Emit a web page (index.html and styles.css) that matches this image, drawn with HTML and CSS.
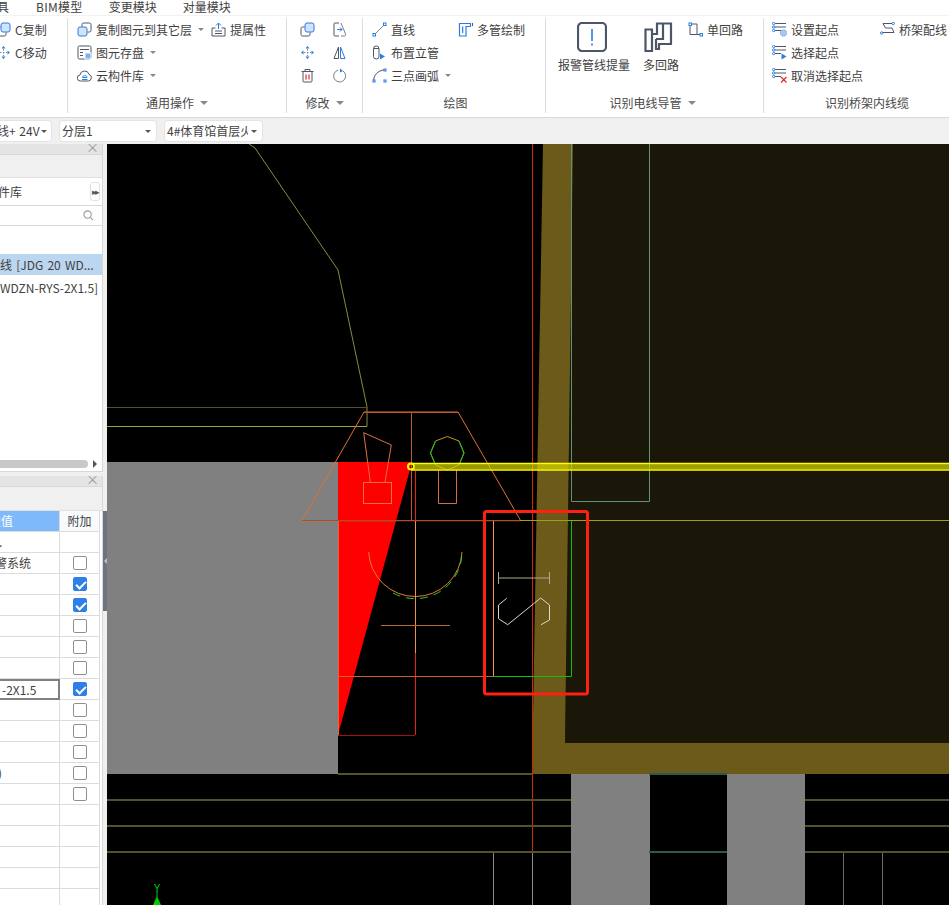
FILE: index.html
```html
<!DOCTYPE html>
<html lang="zh-CN">
<head>
<meta charset="utf-8">
<title>BIM</title>
<link rel="stylesheet" href="styles.css">
</head>
<body>
<div class="app">
  <nav class="menu">
    <span class="m0">具</span><span class="m1">BIM模型</span><span class="m2">变更模块</span><span class="m3">对量模块</span>
  </nav>

  <section class="ribbon">
    <div class="group g0">
      <div class="gbody">
        <div class="item"><svg class="ic" viewBox="0 0 15 15"><rect class="bf" x="5" y="1" width="9" height="9" rx="2"/><path class="dk" d="M4.5 5h-2A1.5 1.5 0 0 0 1 6.5v6A1.5 1.5 0 0 0 2.500 14h6a1.500 1.500 0 0 0 1.500-1.500v-2"/></svg><span>C复制</span></div>
        <div class="item"><svg class="ic" viewBox="0 0 15 15"><path class="bl" d="M7.500 1 5.500 3.500h4zM7.500 14l-2-2.500h4zM1 7.500l2.500-2v4zM14 7.500l-2.500-2v4z"/><path class="dash" d="M7.500 4v7M4 7.500h7"/></svg><span>C移动</span></div>
      </div>
    </div>

    <div class="group g1">
      <div class="gbody">
        <div class="item"><svg class="ic" viewBox="0 0 15 15"><rect class="bf" x="1" y="5" width="9" height="9" rx="2"/><path class="dk" d="M5 4.500v-2A1.500 1.500 0 0 1 6.500 1h6A1.500 1.500 0 0 1 14 2.500v6a1.500 1.500 0 0 1-1.500 1.500h-2"/></svg><span>复制图元到其它层</span><i class="caret"></i></div>
        <div class="item"><svg class="ic" viewBox="0 0 15 15"><path class="bs" d="M7.500 7V1M5 3.500 7.500 1 10 3.500"/><path class="dk" d="M4.500 6H1v8h13V6h-3.500M4 9h7M4 11.500h7"/></svg><span>提属性</span></div>
        <div class="item wide"><svg class="ic" viewBox="0 0 15 15"><rect class="dk" x="1" y="1" width="13" height="13" rx="1.500"/><path class="dk" d="M3 4.500h9M3 7.500h3M3 10.500h3"/><rect class="bl2" x="8" y="8" width="6" height="6"/></svg><span>图元存盘</span><i class="caret"></i></div>
        <div class="item wide"><svg class="ic" viewBox="0 0 15 15"><path class="dk" d="M3.500 13a3 3 0 0 1-.5-6 4.600 4.600 0 0 1 9-.6A3.400 3.400 0 0 1 11.500 13z"/><path class="bs" d="M5 11.500h5.500M5.500 9.500c0-2.500 4.500-2.500 4.500 0z"/></svg><span>云构件库</span><i class="caret"></i></div>
      </div>
      <div class="glabel">通用操作<i class="caret big"></i></div>
    </div>

    <div class="group g2">
      <div class="gbody">
        <div class="item"><svg class="ic" viewBox="0 0 15 15"><rect class="bf" x="5" y="1" width="9" height="9" rx="2"/><path class="dk" d="M4.500 5h-2A1.500 1.500 0 0 0 1 6.500v6A1.500 1.500 0 0 0 2.500 14h6a1.500 1.500 0 0 0 1.500-1.500v-2"/></svg></div>
        <div class="item"><svg class="ic" viewBox="0 0 15 15"><path class="dk" d="M7 1H3a1 1 0 0 0-1 1v11a1 1 0 0 0 1 1h4"/><path class="gr" d="M9 1l4.500 11a1.300 1.300 0 0 1-1.300 2H9"/><path class="bs" d="M5 7.500h5M8 5.500l2 2-2 2"/></svg></div>
        <div class="item"><svg class="ic" viewBox="0 0 15 15"><path class="bl" d="M7.500 1 5.500 3.500h4zM7.500 14l-2-2.500h4zM1 7.500l2.500-2v4zM14 7.500l-2.500-2v4z"/><path class="dash" d="M7.500 4v7M4 7.500h7"/></svg></div>
        <div class="item"><svg class="ic" viewBox="0 0 15 15"><path class="dk" d="M6.500 2v11.500H2z"/><path class="bs" d="M8.500 2v11.500H13z"/></svg></div>
        <div class="item"><svg class="ic" viewBox="0 0 15 15"><path class="dk" d="M1.500 3.500h12M5 3.500V1.500h5v2M3 3.500v9.500a1 1 0 0 0 1 1h7a1 1 0 0 0 1-1V3.500"/><path class="rd" d="M6 6.500v5M9 6.500v5"/></svg></div>
        <div class="item"><svg class="ic" viewBox="0 0 15 15"><path class="gr" d="M6 2.200A6 6 0 1 0 11 3"/><path class="bl" d="M8 .500l3 2.500-3 1.500z"/></svg></div>
      </div>
      <div class="glabel">修改<i class="caret big"></i></div>
    </div>

    <div class="group g3">
      <div class="gbody">
        <div class="item"><svg class="ic" viewBox="0 0 15 15"><path class="gr" d="M2.500 12.500 12.500 2.500"/><rect class="nd" x="1" y="11.500" width="2.500" height="2.500"/><rect class="nd" x="11.500" y="1" width="2.500" height="2.500"/></svg><span>直线</span></div>
        <div class="item"><svg class="ic" viewBox="0 0 15 15"><path class="bp" d="M1.500 1.500h11v3H8v9.500H1.500zM4.700 4.500V11"/><path class="dk" d="M14.500 1v3"/></svg><span>多管绘制</span></div>
        <div class="item"><svg class="ic" viewBox="0 0 15 15"><rect class="dk" x="1.500" y="1" width="5.500" height="13" rx="2.700"/><path class="dk" d="M1.500 3.500h5.500"/><path class="bl" d="M8 8.500l5 3-5 3z"/></svg><span>布置立管</span></div>
        <div class="item"></div>
        <div class="item"><svg class="ic" viewBox="0 0 15 15"><path class="dk" d="M1.500 13.500C1.500 7 6 2.500 12.500 1.800"/><rect class="nd" x="1" y="12" width="2" height="2"/><rect class="nd" x="12" y="1" width="2" height="2"/><rect class="nd" x="12" y="12" width="2" height="2"/></svg><span>三点画弧</span><i class="caret"></i></div>
      </div>
      <div class="glabel">绘图</div>
    </div>

    <div class="group g4">
      <div class="gbody">
        <div class="bigitem b1">
          <svg class="icb" viewBox="0 0 30 30"><rect class="dk2" x="1" y="1" width="28" height="28" rx="4"/><path class="bs2" d="M15 7v12M15 21.500v2"/></svg>
          <span>报警管线提量</span>
        </div>
        <div class="bigitem b2">
          <svg class="icb" viewBox="0 0 30 30"><path class="dk2" d="M1.500 7.500H8V29H1.500zM8 12h5V1.500h6V17h-7M19 1.500h8V22H15v5h-3V17"/></svg>
          <span>多回路</span>
        </div>
        <div class="item"><svg class="ic" viewBox="0 0 15 15"><path class="dk" d="M2 2v10.500h10.500M2 2h7v10.500"/><rect class="nd" x="1" y="1" width="2.500" height="2.500"/><rect class="nd" x="12" y="11.500" width="2.500" height="2.500"/></svg><span>单回路</span></div>
      </div>
      <div class="glabel">识别电线导管<i class="caret big"></i></div>
    </div>

    <div class="group g5">
      <div class="gbody">
        <div class="item"><svg class="ic" viewBox="0 0 15 15"><path class="dk" d="M3 1.500h11M3 5h11M3 8.500h6"/><circle class="nd" cx="1.700" cy="1.500" r="1.200"/><circle class="nd" cx="1.700" cy="5" r="1.200"/><circle class="nd" cx="1.700" cy="8.500" r="1.200"/><circle class="bd" cx="11.500" cy="11" r="3.200"/></svg><span>设置起点</span></div>
        <div class="item"><svg class="ic" viewBox="0 0 15 15"><path class="dk" d="M12.500 1.500H3L5.500 6H12L14 10.500H2.500"/><circle class="nd" cx="13.200" cy="1.500" r="1.200"/><circle class="nd" cx="1.700" cy="11" r="1.200"/></svg><span>桥架配线</span></div>
        <div class="item"><svg class="ic" viewBox="0 0 15 15"><path class="dk" d="M3 1.500h11M3 5h11M3 8.500h6"/><circle class="nd" cx="1.700" cy="1.500" r="1.200"/><circle class="nd" cx="1.700" cy="5" r="1.200"/><circle class="nd" cx="1.700" cy="8.500" r="1.200"/><path class="bl" d="M9.500 8.500l5 3-5 3z"/></svg><span>选择起点</span></div>
        <div class="item"></div>
        <div class="item"><svg class="ic" viewBox="0 0 15 15"><path class="dk" d="M3 1.500h11M3 5h11M3 8.500h6"/><circle class="nd" cx="1.700" cy="1.500" r="1.200"/><circle class="nd" cx="1.700" cy="5" r="1.200"/><circle class="nd" cx="1.700" cy="8.500" r="1.200"/><path class="rd" d="M9 9l5.500 5.500M14.500 9 9 14.500"/></svg><span>取消选择起点</span></div>
      </div>
      <div class="glabel">识别桥架内线缆</div>
    </div>
  </section>

  <section class="toolbar">
    <div class="combo c1"><span class="ctext">线+ 24V</span><i class="caret dark"></i></div>
    <div class="combo c2"><span class="ctext">分层1</span><i class="caret dark"></i></div>
    <div class="combo c3"><span class="ctext">4#体育馆首层火灾</span><i class="caret dark"></i></div>
  </section>

  <main class="main">
    <aside class="side">
      <section class="panel p1">
        <header class="ptitle"><span class="close">×</span></header>
        <div class="pbar"></div>
        <div class="librow"><span class="libtext">构件库</span><span class="more">▸▸</span></div>
        <div class="search"><svg class="mag" viewBox="0 0 12 12"><circle cx="5" cy="5" r="4"/><path d="M8 8l3 3"/></svg></div>
        <div class="list">
          <div class="lrow sel"><span class="lt1">电线 [JDG 20 WD...</span></div>
          <div class="lrow"><span class="lt2">WDZN-RYS-2X1.5]</span></div>
        </div>
        <div class="hscroll"><span class="thumb"></span><i class="arrow"></i></div>
      </section>

      <section class="panel p2">
        <header class="ptitle"><span class="close">×</span></header>
        <div class="pbar"></div>
        <div class="grid">
          <div class="cell head blue"><span class="clip-h">属性值</span></div><div class="cell head">附加</div>
          <div class="cell"><span class="dot">.</span></div><div class="cell"></div>
          <div class="cell"><span class="clip-s">报警系统</span></div><div class="cell"><i class="cb"></i></div>
          <div class="cell"></div><div class="cell"><i class="cb on"></i></div>
          <div class="cell"></div><div class="cell"><i class="cb on"></i></div>
          <div class="cell"></div><div class="cell"><i class="cb"></i></div>
          <div class="cell"></div><div class="cell"><i class="cb"></i></div>
          <div class="cell"></div><div class="cell"><i class="cb"></i></div>
          <div class="cell edit">-2X1.5</div><div class="cell"><i class="cb on"></i></div>
          <div class="cell"></div><div class="cell"><i class="cb"></i></div>
          <div class="cell"></div><div class="cell"><i class="cb"></i></div>
          <div class="cell"></div><div class="cell"><i class="cb"></i></div>
          <div class="cell"><span class="clip-p">)</span></div><div class="cell"><i class="cb"></i></div>
          <div class="cell"></div><div class="cell"><i class="cb"></i></div>
          <div class="cell"></div><div class="cell"></div>
          <div class="cell"></div><div class="cell"></div>
          <div class="cell"></div><div class="cell"></div>
          <div class="cell"></div><div class="cell"></div>
          <div class="cell"></div><div class="cell"></div>
        </div>
      </section>
    </aside>

    <div class="split"><div class="handle"><i></i></div></div>

    <div class="canvas">
      <svg class="cad" viewBox="107 144 842 761" aria-label="CAD">
        <rect x="107" y="144" width="842" height="761" fill="#000"/>
        <polygon points="573,144 949,144 949,743 565,743" fill="#1a1608"/>
        <polygon points="543,144 573,144 565,743 949,743 949,774 532,774" fill="#6b5a1a"/>
        <rect x="107" y="462" width="231" height="312" fill="#808080"/>
        <rect x="571" y="774" width="79" height="131" fill="#808080"/>
        <rect x="727" y="774" width="78" height="131" fill="#808080"/>
        <polygon points="338,462 412,462 338,735" fill="#f00"/>

        <g fill="none" stroke-width="1">
          <path d="M249 144 255 148 338 270 367 407V426.500" stroke="#8a8a40"/>
          <path d="M107 407.500H367" stroke="#55522a"/>
          <path d="M107 426.500H367" stroke="#a0a040"/>
          <path d="M532.500 144V852" stroke="#d02800"/>
          <path d="M571.500 501.500V144M649.500 144V501.500H571.500" stroke="#5f9278"/>

          <path d="M338 774H532M107 800H571M805 800H949M107 826H571M805 826H949M107 852H571M805 852H949" stroke="#55522a" stroke-width="2"/>
          <path d="M649 774H727M649 852H727" stroke="#2a5a50" stroke-width="2"/>
          <path d="M493.500 853V905M532.500 853V905" stroke="#8a8a8a"/>
          <path d="M843.500 853V905M882.500 853V905" stroke="#6a6a6a"/>

          <path d="M364 412H458L520.700 520.700H302Z" stroke="#e07030"/>
          <path d="M364 412.500H458" stroke="#b85a2c"/>
          <path d="M411.500 412V521" stroke="#b85a2c"/>
          <path d="M302 520.500H520" stroke="#a8502a"/>
          <path d="M520 520.500H949" stroke="#a0a020"/>
          <path d="M363.700 432.700 391.300 445 385 482M370.300 482 363.700 432.700" stroke="#e07040"/>
          <rect x="363.500" y="482.500" width="28" height="21" stroke="#f07040"/>
          <polygon points="447.300,436.500 459,441 464,453 459,465 447.300,470 435.500,465 430.500,453 435.500,441" stroke="#d09020"/>
          <path d="M459 441 464 453 459 465M435.500 465 430.500 453 435.500 441" stroke="#20c020"/>
          <path d="M438.500 470V503.500H456.500V470" stroke="#d07040"/>
          <path d="M368.700 552A46.700 46.700 0 0 0 462 552" stroke="#e08030"/>
          <path d="M393 593A46.700 46.700 0 0 0 462 552" stroke="#30c030" stroke-dasharray="8 6"/>
          <path d="M415.500 471V521M415.500 653V735" stroke="#e82010"/>
          <path d="M415.500 521V653" stroke="#f09040"/>
          <path d="M381 625.500H450" stroke="#c06a30"/>
          <path d="M338.500 521V735" stroke="#f06030"/>
          <path d="M338 676.500H493" stroke="#d06030"/>
          <path d="M338 735.500H415" stroke="#a01010"/>
          <path d="M493.500 521V676" stroke="#ff9050"/>
          <path d="M493 676.500H571.500V521" stroke="#10c010"/>

          <path d="M498.500 572V584M498.500 578H549.500M549.500 572V584" stroke="#b0a890"/>
          <path d="M506.700 598.300 498.500 605V618.700L507.700 624.700 540.700 598 549.500 605V620L541 624.700" stroke="#dcd8c8"/>

          <path d="M412 463.500H949M412 470H949" stroke="#ff0" stroke-width="1.500"/>
          <circle cx="411" cy="466.500" r="3" stroke="#ff0" stroke-width="2"/>
          <rect x="484.500" y="511.500" width="103" height="182.500" rx="2" stroke="#ff2010" stroke-width="3"/>
        </g>
        <rect x="414" y="464" width="535" height="6" fill="#d8d800" opacity=".7"/>
        <polygon points="157,896 153,905 161,905" fill="#0c0"/>
        <path d="M157 891V897" stroke="#0c0" fill="none"/>
        <text class="axis" x="157" y="892">Y</text>
      </svg>
    </div>
  </main>
</div>
</body>
</html>
```

FILE: styles.css
```css
* { box-sizing: border-box; }
html, body { margin: 0; padding: 0; }
body {
  width: 949px;
  height: 905px;
  overflow: hidden;
  background: #f0f0f0;
  color: #3f3f3f;
  font: 12px/16px "Noto Sans CJK SC", "Noto Sans", sans-serif;
}
.app { display: flex; flex-direction: column; width: 949px; height: 905px; overflow: hidden; }

/* top menu */
.menu { display: flex; flex: none; height: 15px; background: #fff; line-height: 13px; white-space: nowrap; overflow: hidden; }
.m0 { margin-left: -3px; }
.m1 { margin-left: 27px; letter-spacing: .3px; }
.m2 { margin-left: 26px; }
.m3 { margin-left: 26px; }

/* ribbon */
.ribbon {
  display: flex;
  flex: none;
  height: 103px;
  padding-top: 2px;
  background: #fff;
  border-top: 1px solid #f2f2f2;
  border-bottom: 1px solid #d8d8d8;
  overflow: hidden;
}
.group { flex: none; height: 95px; border-right: 1px solid #dcdcdc; }
.gbody { height: 77px; }
.glabel { display: flex; align-items: center; justify-content: center; height: 16px; color: #4a4a4a; }
.g0 { width: 68px; }
.g1 { width: 219px; }
.g2 { width: 76px; }
.g3 { width: 183px; }
.g4 { width: 218px; }
.g5 { width: 185px; border-right: 0; }

.g0 .gbody { margin-left: -4px; }
.g1 .gbody, .g2 .gbody, .g3 .gbody, .g5 .gbody { display: grid; grid-auto-rows: 23px; align-content: start; }
.g1 .gbody { grid-template-columns: 134px auto; padding-left: 9px; }
.g1 .wide { grid-column: 1 / -1; }
.g2 .gbody { grid-template-columns: 32px 15px; padding-left: 13px; }
.g3 .gbody { grid-template-columns: 86px auto; padding-left: 9px; }
.g3 .glabel { padding-left: 3px; }
.g4 .gbody { display: flex; align-items: flex-start; padding: 4px 0 0 12px; }
.g4 .glabel { padding-right: 4px; }
.g5 .gbody { grid-template-columns: 108px auto; padding-left: 8px; }
.g5 .glabel { padding-left: 21px; }

.item { display: flex; align-items: center; gap: 4px; height: 23px; white-space: nowrap; }
.ic { flex: none; width: 15px; height: 15px; }
.icb { display: block; width: 30px; height: 30px; margin-bottom: 5px; }
.bigitem { display: flex; flex-direction: column; align-items: center; flex: none; white-space: nowrap; }
.b1 { width: 72px; }
.b1 .icb { margin-right: 4px; }
.b2 { width: 36px; margin-left: 13px; margin-right: 9px; }
.b2 .icb { margin-right: 4px; }
.g4 .item { margin-top: -4px; }

.caret {
  display: inline-block;
  flex: none;
  width: 0;
  height: 0;
  margin-left: 2px;
  border-left: 3px solid transparent;
  border-right: 3px solid transparent;
  border-top: 3px solid #8a8a8a;
}
.caret.big { margin-left: 6px; border-left-width: 4px; border-right-width: 4px; border-top-width: 4px; }
.caret.dark { border-top-color: #555; margin-left: 0; }

/* icon strokes */
.dk { fill: none; stroke: #4d5668; stroke-width: 1; }
.dk2 { fill: none; stroke: #4d5668; stroke-width: 2.2; }
.bs { fill: none; stroke: #2d7be5; stroke-width: 1; }
.bs2 { fill: none; stroke: #2d7be5; stroke-width: 1.6; }
.bp { fill: none; stroke: #2d7be5; stroke-width: 1.2; }
.bf { fill: #cfe3fb; stroke: #2d7be5; stroke-width: 1; }
.bl { fill: #2d7be5; }
.bl2 { fill: #7fb0ef; stroke: #fff; stroke-width: 1; }
.bd { fill: #a9c8f0; stroke: #6fa3e8; stroke-dasharray: 1.500 1; }
.gr { fill: none; stroke: #77808e; stroke-width: 1; }
.rd { fill: none; stroke: #e02828; stroke-width: 1.200; }
.nd { fill: #fff; stroke: #2d7be5; stroke-width: 1; }
.dash { fill: none; stroke: #7a8494; stroke-width: 1; stroke-dasharray: 1.500 1.500; }

/* toolbar */
.toolbar { display: flex; flex: none; gap: 7px; height: 26px; padding-top: 2px; background: #f0f0f0; }
.combo {
  display: flex;
  align-items: center;
  flex: none;
  height: 22px;
  background: #fff;
  border: 1px solid #e4e4e4;
  border-radius: 4px;
  white-space: nowrap;
  overflow: hidden;
}
.ctext { flex: 1; min-width: 0; overflow: hidden; }
.c1 { width: 52px; padding-right: 4px; border-left: 0; border-radius: 0 4px 4px 0; }
.c1 .ctext { margin-left: -3px; flex: none; width: 44px; overflow: visible; word-spacing: 1px; }
.c2 { width: 98px; padding: 0 5px 0 2px; }
.c3 { width: 99px; padding: 0 5px 0 2px; }
.c3 .ctext { margin-right: 3px; }

/* main */
.main { display: flex; flex: 1; min-height: 0; }
.side { flex: none; display: flex; flex-direction: column; gap: 4px; width: 103px; background: #f0f0f0; }
.panel { display: flex; flex-direction: column; background: #fff; border-right: 1px solid #d8d8d8; }
.panel > * { flex: none; }
.p1 { flex: none; height: 328px; border-bottom: 1px solid #d8d8d8; }
.p2 { flex: 1; min-height: 0; overflow: hidden; }
.p2 .pbar { height: 24px; }
.ptitle { position: relative; height: 11px; background: #e4e4e4; border-bottom: 1px solid #d8d8d8; }
.close { position: absolute; right: 3px; top: -4px; color: #999; font-size: 13px; line-height: 13px; }
.pbar { height: 23px; background: #f0f0f0; border-bottom: 1px solid #e0e0e0; }
.librow { display: flex; align-items: center; justify-content: space-between; height: 28px; padding-right: 2px; border-bottom: 1px solid #d8d8d8; }
.libtext { margin-left: -14px; }
.more {
  width: 10px;
  height: 19px;
  border: 1px solid #e2e2e2;
  border-radius: 3px;
  color: #555;
  font-size: 9px;
  line-height: 17px;
  letter-spacing: -2px;
  text-align: center;
}
.search { display: flex; align-items: center; justify-content: flex-end; height: 20px; padding-right: 8px; border-bottom: 1px solid #d8d8d8; }
.mag { width: 11px; height: 11px; fill: none; stroke: #9a9a9a; stroke-width: 1.200; }
.panel > .list { flex: 1; min-height: 0; padding-top: 28px; }
.lrow { height: 21px; line-height: 21px; white-space: nowrap; overflow: hidden; }
.lrow + .lrow { margin-top: 2px; }
.sel { background: #bcd6f0; }
.lt1 { margin-left: -12px; word-spacing: 1.500px; }
.hscroll { display: flex; align-items: center; height: 8px; margin-bottom: 3px; }
.thumb { width: 88px; height: 8px; background: #c8c8c8; border-radius: 0 4px 4px 0; }
.arrow {
  width: 0;
  height: 0;
  margin-left: 5px;
  border-top: 4px solid transparent;
  border-bottom: 4px solid transparent;
  border-left: 4px solid #555;
}

/* property grid */
.grid { display: grid; grid-template-columns: 60px 40px; grid-auto-rows: 21px; width: 100px; }
.cell {
  display: flex;
  align-items: center;
  justify-content: center;
  min-width: 0;
  border-right: 1px solid #dcdcdc;
  border-bottom: 1px solid #dcdcdc;
  white-space: nowrap;
}
.cell:nth-child(odd) { justify-content: flex-start; }
.head { background: #f8fafd; }
.blue { background: #7eb9f9; color: #fff; }
.clip-h { margin-left: -23px; }
.clip-s { margin-left: -17px; }
.clip-p { margin-left: -2px; }
.dot { margin-left: -1px; }
.edit {
  margin-left: -4px;
  padding-left: 4px;
  border: 2px solid #808080;
  background: #fff;
}
.cb {
  position: relative;
  display: block;
  width: 14px;
  height: 14px;
  background: #fff;
  border: 1px solid #8f8f8f;
  border-radius: 2px;
}
.cb.on { background: #2f7fe8; border-color: #2f7fe8; }
.cb.on::after {
  content: "";
  position: absolute;
  left: 4px;
  top: 1px;
  width: 4px;
  height: 8px;
  border-right: 2px solid #fff;
  border-bottom: 2px solid #fff;
  transform: rotate(45deg);
}

/* splitter */
.split { flex: none; width: 4px; background: #f0f0f0; padding-top: 367px; }
.handle { display: flex; align-items: center; justify-content: center; height: 100px; background: #6b7480; }
.handle i {
  width: 0;
  height: 0;
  border-top: 3px solid transparent;
  border-bottom: 3px solid transparent;
  border-right: 3px solid #b8bec8;
}

/* drawing */
.canvas { flex: 1; min-width: 0; }
.cad { display: block; width: 842px; height: 761px; }
.axis { fill: #0c0; font: 10px "Liberation Sans", sans-serif; text-anchor: middle; }
```
